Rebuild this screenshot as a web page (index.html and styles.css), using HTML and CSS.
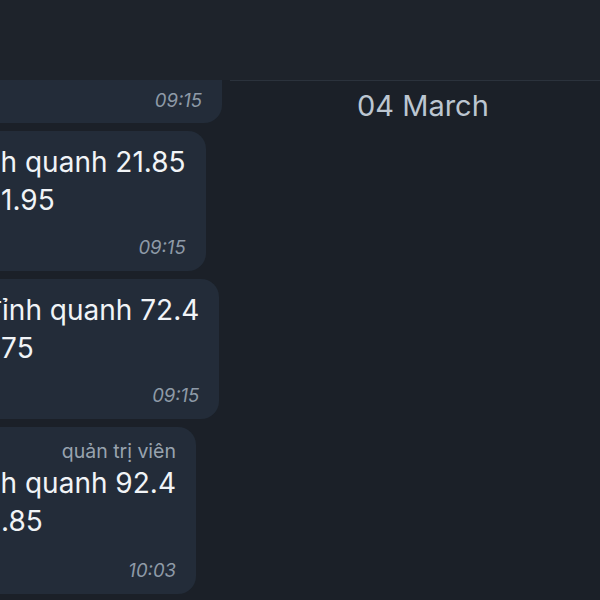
FILE: index.html
```html
<!DOCTYPE html>
<html lang="vi">
<head>
    <meta charset="UTF-8">
    <meta name="viewport" content="width=device-width, initial-scale=1.0">
    <title>Chat</title>
    <link rel="stylesheet" href="styles.css">
</head>
<body>
    <div class="topbar"></div>

    <div class="main">
        <div class="chat">
            <div class="bubble first">
                <div class="time">09:15</div>
            </div>
            <div class="bubble">
                <div class="text">nh quanh 21.85<br>21.95</div>
                <div class="time">09:15</div>
            </div>
            <div class="bubble">
                <div class="text">đỉnh quanh 72.4<br>275</div>
                <div class="time">09:15</div>
            </div>
            <div class="bubble">
                <div class="role">quản trị viên</div>
                <div class="text">nh quanh 92.4<br>2.85</div>
                <div class="time">10:03</div>
            </div>
        </div>

        <div class="side">
            <div class="date">04 March</div>
        </div>
    </div>
</body>
</html>
```

FILE: styles.css
```css
/* General Styles */
body {
    margin: 0;
    padding: 0;
    height: 600px;
    overflow: hidden;
    background-color: #1b2028;
    font-family: Inter, "Noto Sans", sans-serif;
}

.topbar {
    height: 80px;
    background: #1e232b;
}

.main {
    display: flex;
}

.chat {
    width: 230px;
    flex-shrink: 0;
    display: flex;
    flex-direction: column;
    align-items: flex-start;
    gap: 8px;
}

.bubble {
    margin-left: -32px;
    padding: 12px 20px 12px 16px;
    background: #232c39;
    border-radius: 18px;
    display: flex;
    flex-direction: column;
}

.bubble.first {
    border-radius: 0 0 18px 18px;
    padding-top: 8px;
    padding-bottom: 11px;
    width: 254px;
    box-sizing: border-box;
}

.text {
    color: #f1f4f7;
    font-size: 28px;
    line-height: 38px;
    white-space: nowrap;
}

.role {
    color: #98a3af;
    font-size: 19.5px;
    line-height: 25px;
    text-align: right;
}

.time {
    margin-top: 16px;
    color: #8e9aa7;
    font-size: 18.5px;
    font-style: italic;
    line-height: 24px;
    text-align: right;
}

.role + .text + .time {
    margin-top: 18px;
}

.first .time {
    margin-top: 0;
}

.side {
    flex: 1;
    border-top: 1px solid #2b323c;
    padding: 8px 0 0 127px;
}

.date {
    color: #bcc6d1;
    font-size: 29px;
    line-height: 34px;
}
```
